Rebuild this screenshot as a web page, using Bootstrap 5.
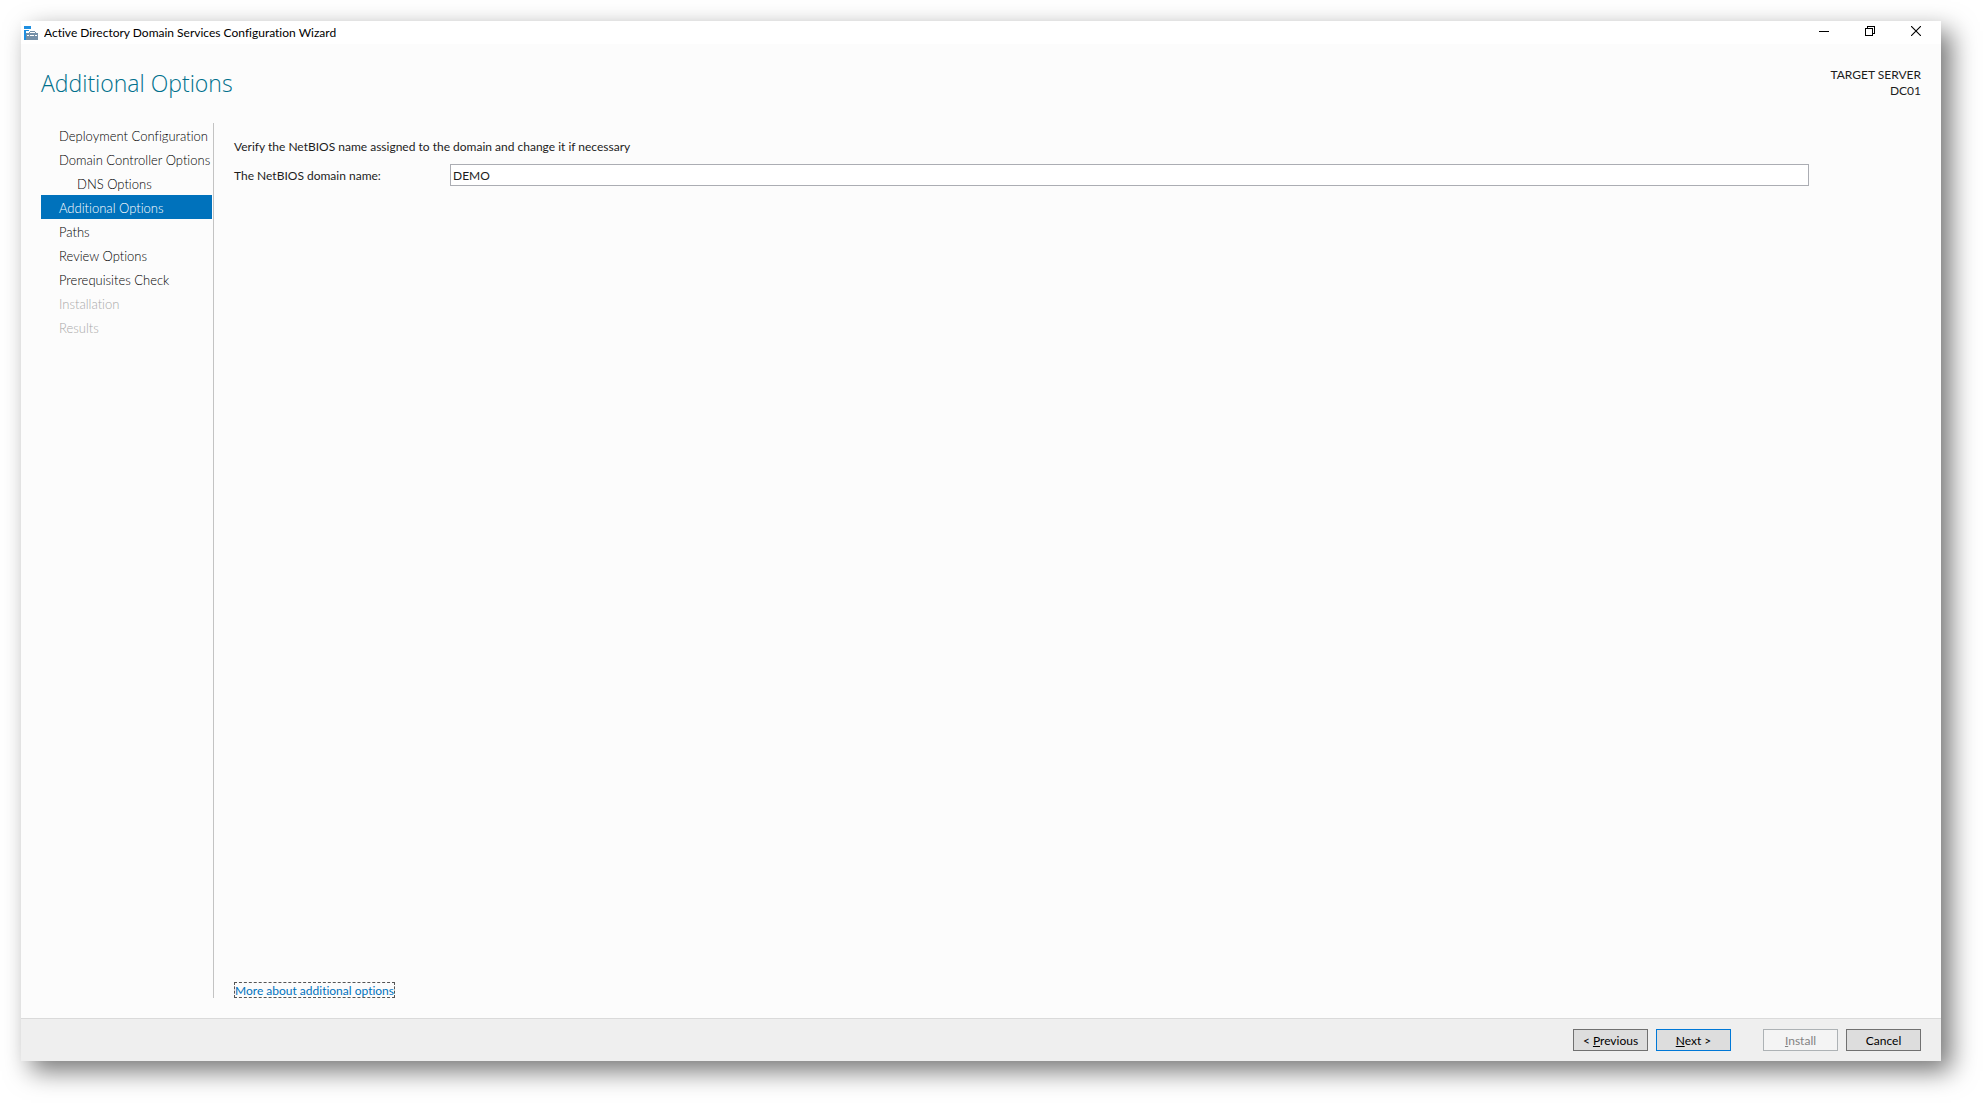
<!DOCTYPE html>
<html lang="en">
<head>
<meta charset="utf-8">
<meta name="viewport" content="width=device-width, initial-scale=1">
<title>Active Directory Domain Services Configuration Wizard</title>
<link href="https://cdn.jsdelivr.net/npm/bootstrap@5.3.0/dist/css/bootstrap.min.css" rel="stylesheet">
<style>
body { font-family: Lato, "Open Sans", sans-serif; font-variant-ligatures: none; font-size: 12px; line-height: 16px; color: #1c1c1c; background: #fff; padding: 21px 42px 42px 21px; }
.wizard { background: #fcfcfc; box-shadow: 10px 10px 24px rgba(0,0,0,.54); }
.titlebar { background: #fff; color: #000; height: 23px; padding-left: 3px; }
.app-title { margin-left: 6px; }
.win-btn { width: 46px; height: 20px; line-height: 0; }
.win-controls { padding-right: 2px; }
.page-head { height: 79px; padding: 23px 20px 0; }
.page-title { font-family: "Open Sans", sans-serif; font-size: 23px; line-height: 32px; font-weight: 300; color: #00708c; }
.wizard-body { padding: 0 20px 20px; }
.steps { width: 173px; border-right: 1px solid #c3c3c3; padding-right: 1px; }
.steps .nav-link { font-size: 13px; line-height: 22px; padding: 2px 0 0 18px; color: #000; border-radius: 0; white-space: nowrap; font-weight: 300; }
.steps .nav-link.sub-step { padding-left: 36px; }
.steps .nav-link.active { background: #0072bc; color: #fff; }
.steps .nav-link.disabled { color: #a8a8a8; }
.pane { padding: 16px 112px 0 20px; }
.intro { margin-bottom: 9px; }
.name-label { width: 216px; padding-top: 1px; }
.name-box { height: 22px; padding: 0 2px; font-size: 12px; line-height: 16px; border: 1px solid #abadb3; border-radius: 0; color: #1c1c1c; background: #fff; }
.more-link { color: #0072bc; line-height: 15px; outline: 1px dashed #555; outline-offset: -1px; padding: 1px 1px 0; }
.wizard-foot { background: #efefef; border-top: 1px solid #dadada; padding: 10px 20px; }
.wbtn { width: 75px; height: 22px; padding: 1px 0 0; font-size: 12px; line-height: 16px; border-radius: 0; border: 1px solid #707070; background: #ddd; color: #000; }
.wbtn.default-btn { border-color: #0078d7; }
.wbtn:disabled { background: #f4f4f4; border-color: #adb2b5; color: #838383; opacity: 1; }
.gap-wide { margin-left: 24px; }
</style>
<script src="https://cdn.jsdelivr.net/npm/bootstrap@5.3.0/dist/js/bootstrap.bundle.min.js"></script>
</head>
<body class="min-vh-100 d-flex flex-column">
<main class="wizard flex-grow-1 d-flex flex-column">
  <header class="titlebar d-flex align-items-center">
    <svg width="14" height="14" viewBox="0 0 14 14" class="flex-shrink-0" shape-rendering="crispEdges" aria-hidden="true">
      <path fill="#1e8fe1" d="M0 0h7v3H0zM0 4h5v1H2v9H0z"/>
      <path fill="#7590a8" fill-rule="evenodd" d="M6 5h5v1h1v1h2v7H2V7h3V6h1zM6 6v1h5V6z"/>
      <path fill="#fff" d="M3 9h10v1H3z"/>
      <path fill="#7590a8" d="M5 9h1v1H5zM10 9h1v1h-1z"/>
    </svg>
    <span class="app-title text-truncate">Active Directory Domain Services Configuration Wizard</span>
    <div class="win-controls ms-auto d-flex align-self-start">
      <button class="win-btn btn p-0 border-0 rounded-0" type="button" aria-label="Minimize"><svg width="10" height="10" viewBox="0 0 10 10" shape-rendering="crispEdges"><path d="M0 5h10v1H0z"/></svg></button>
      <button class="win-btn btn p-0 border-0 rounded-0" type="button" aria-label="Restore"><svg width="10" height="10" viewBox="0 0 10 10" fill="none" stroke="#000" shape-rendering="crispEdges"><path d="M.5 2.500h7v7h-7zM2.500 2.500v-2h7v7h-2"/></svg></button>
      <button class="win-btn btn p-0 border-0 rounded-0" type="button" aria-label="Close"><svg width="10" height="10" viewBox="0 0 10 10" stroke="#000" stroke-width="1.100"><path d="M0 0l10 10M10 0L0 10"/></svg></button>
    </div>
  </header>
  <div class="page-head d-flex justify-content-between">
    <h1 class="page-title m-0">Additional Options</h1>
    <div class="text-end">TARGET SERVER<br>DC01</div>
  </div>
  <div class="wizard-body d-flex flex-grow-1">
    <nav class="steps nav flex-column flex-nowrap flex-shrink-0" aria-label="Wizard steps">
      <a class="nav-link" href="#">Deployment Configuration</a>
      <a class="nav-link" href="#">Domain Controller Options</a>
      <a class="nav-link sub-step" href="#">DNS Options</a>
      <a class="nav-link active" href="#" aria-current="step">Additional Options</a>
      <a class="nav-link" href="#">Paths</a>
      <a class="nav-link" href="#">Review Options</a>
      <a class="nav-link" href="#">Prerequisites Check</a>
      <a class="nav-link disabled" href="#" aria-disabled="true">Installation</a>
      <a class="nav-link disabled" href="#" aria-disabled="true">Results</a>
    </nav>
    <section class="pane flex-grow-1 d-flex flex-column">
      <p class="intro">Verify the NetBIOS name assigned to the domain and change it if necessary</p>
      <div class="d-flex align-items-center">
        <label class="name-label flex-shrink-0" for="netbios">The NetBIOS domain name:</label>
        <input class="name-box form-control" id="netbios" type="text" value="DEMO">
      </div>
      <div class="mt-auto"><a class="more-link d-inline-block text-decoration-none align-top" href="#">More about additional options</a></div>
    </section>
  </div>
  <footer class="wizard-foot d-flex justify-content-end gap-2">
    <button class="btn wbtn" type="button">&lt; <u>P</u>revious</button>
    <button class="btn wbtn default-btn" type="button"><u>N</u>ext &gt;</button>
    <button class="btn wbtn gap-wide" type="button" disabled><u>I</u>nstall</button>
    <button class="btn wbtn" type="button">Cancel</button>
  </footer>
</main>
</body>
</html>
